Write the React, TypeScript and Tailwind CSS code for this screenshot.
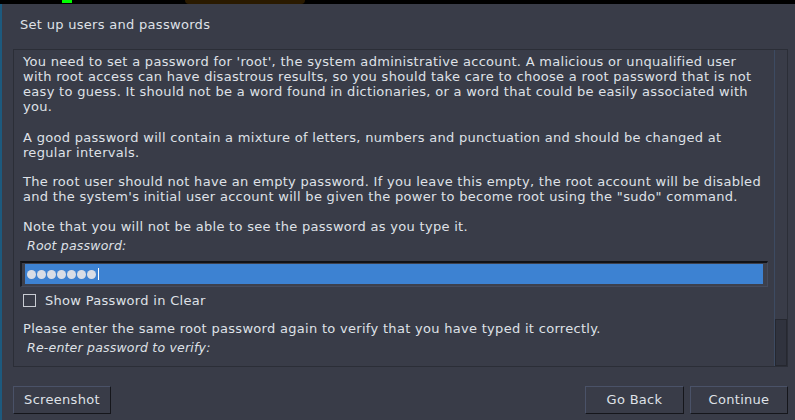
import { useState } from "react"

const Lines = ({ lines }: { lines: string[] }) => (
  <div className="leading-[15px]">
    {lines.map((l) => (
      <div key={l} className="whitespace-nowrap">{l}</div>
    ))}
  </div>
)

const btn =
  "h-[28px] bg-[#393c48] border border-[#4a5268] border-b-[#15161b] border-r-[#15161b] text-[13px] tracking-[0.3px]"

const App = () => {
  const [show, setShow] = useState(false)

  return (
    <div
      className="w-[795px] h-[420px] overflow-hidden bg-[#393c48] text-[#dfe1e7] flex flex-col"
      style={{ fontFamily: '"DejaVu Sans", sans-serif' }}
    >
      {/* desktop strip peeking above the window */}
      <div className="relative h-[4px] bg-black shrink-0">
        <div className="absolute left-[62px] top-0 w-[10px] h-[3px] bg-[#00ff00]" />
        <div className="absolute left-[185px] top-0 w-[120px] h-[4px] rounded-b-full bg-[#2a1a00]" />
      </div>

      <div className="flex flex-1 min-h-0">
        <div className="w-[2px] bg-[#1d5a7e] shrink-0" />

        <div className="flex-1 flex flex-col pl-[11px] pr-[7px]">
          <div className="h-[45px] flex items-center pl-[7px] text-[13px] tracking-[0.3px] pb-[3px]">
            Set up users and passwords
          </div>

          <div className="h-[318px] border border-[#2b2e37] flex">
            <div className="flex-1 pl-[9px] pr-[8px] pt-[4px] text-[13px] tracking-[0.3px] flex flex-col">
              <Lines
                lines={[
                  "You need to set a password for 'root', the system administrative account. A malicious or unqualified user",
                  "with root access can have disastrous results, so you should take care to choose a root password that is not",
                  "easy to guess. It should not be a word found in dictionaries, or a word that could be easily associated with",
                  "you.",
                ]}
              />
              <div className="h-[16px]" />
              <Lines
                lines={[
                  "A good password will contain a mixture of letters, numbers and punctuation and should be changed at",
                  "regular intervals.",
                ]}
              />
              <div className="h-[14px]" />
              <Lines
                lines={[
                  "The root user should not have an empty password. If you leave this empty, the root account will be disabled",
                  "and the system's initial user account will be given the power to become root using the \"sudo\" command.",
                ]}
              />
              <div className="h-[15px]" />
              <Lines lines={["Note that you will not be able to see the password as you type it."]} />
              <div className="pl-[4px] pt-[4px] italic text-[12.5px] tracking-[0.2px] leading-[15px]">Root password:</div>

              <div className="mt-[8px] -ml-[3px] mr-[-2px] h-[26px] border-t-2 border-l-2 border-t-[#111217] border-l-[#1c1e25] border-r border-b border-r-[#454b5c] border-b-[#454b5c] bg-[#3d404c] pt-[1px] pb-[2px] pl-[3px] pr-[4px] flex">
                <div className="flex-1 bg-[#3d82d2] flex items-center pl-[2px] gap-[1px]">
                  {[0, 1, 2, 3, 4, 5, 6].map((i) => (
                    <span key={i} className="w-[9px] h-[9px] rounded-full bg-[#d9dde5]" />
                  ))}
                  <span className="w-[1px] h-[12px] bg-white ml-[1px]" />
                </div>
              </div>

              <label className="flex items-center gap-[9px] mt-[6px] cursor-pointer">
                <span className="w-[13px] h-[13px] border border-[#c9ccd3] flex items-center justify-center">
                  {show && <span className="w-[7px] h-[7px] bg-[#c9ccd3]" />}
                </span>
                <input type="checkbox" className="hidden" checked={show} onChange={() => setShow(!show)} />
                <span className="leading-[15px]">Show Password in Clear</span>
              </label>

              <div className="h-[13px]" />
              <Lines lines={["Please enter the same root password again to verify that you have typed it correctly."]} />
              <div className="pl-[4px] pt-[4px] italic text-[12.5px] tracking-[0.2px] leading-[15px]">Re-enter password to verify:</div>
            </div>

            <div className="w-[13px] border-l border-l-[#3d4b62] flex flex-col">
              <div className="flex-1" />
              <div className="h-[47px] bg-[#30333e] border border-[#262830]" />
            </div>
          </div>

          <div className="flex justify-between items-center pt-[19px]">
            <button className={`w-[98px] ${btn}`}>Screenshot</button>
            <div className="flex gap-[6px]">
              <button className={`w-[99px] ${btn}`}>Go Back</button>
              <button className={`w-[98px] ${btn}`}>Continue</button>
            </div>
          </div>
        </div>
      </div>
    </div>
  )
}

export default App
